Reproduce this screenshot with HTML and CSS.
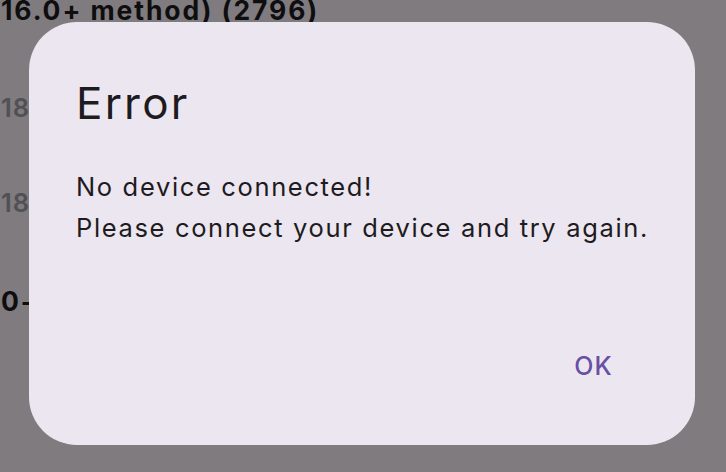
FILE: index.html
```html
<!DOCTYPE html>
<html lang="en">
<head>
<meta charset="utf-8">
<title>Error</title>
<link rel="stylesheet" href="styles.css">
</head>
<body>
<main class="page">
  <div class="row row-title row-first">16.0+ method) (2796)</div>
  <div class="row row-sub row-sub-1">18</div>
  <div class="row row-sub row-sub-2">18</div>
  <div class="row row-title row-last">0-</div>
</main>
<div class="scrim">
  <section class="dialog" role="alertdialog" aria-labelledby="dlg-title">
    <h1 class="dialog-title" id="dlg-title">Error</h1>
    <p class="dialog-body">No device connected!<br>Please connect your device and try again.</p>
    <div class="dialog-actions">
      <button class="text-button" type="button">OK</button>
    </div>
  </section>
</div>
</body>
</html>
```
FILE: styles.css
```css
html, body {
  margin: 0;
  padding: 0;
}
body {
  width: 726px;
  height: 472px;
  overflow: hidden;
  background: #fef7ff;
  font-family: Inter, "Noto Sans", sans-serif;
  color: #1d1b20;
}
.page {
  display: flex;
  flex-direction: column;
  padding-left: 1px;
}
.row {
  line-height: 32px;
  white-space: nowrap;
}
.row-title {
  font-size: 26.5px;
  font-weight: 700;
  letter-spacing: 1.9px;
  color: #1d1b20;
}
.row-sub {
  font-size: 25.5px;
  font-weight: 600;
  letter-spacing: 1px;
  color: #a3a0a7;
}
.row-first { margin-top: -6px; }
.row-sub-1 { margin-top: 66px; }
.row-sub-2 { margin-top: 63px; }
.row-last { margin-top: 66px; }

.scrim {
  position: fixed;
  inset: 0;
  background: rgba(0, 0, 0, 0.5);
  display: flex;
  align-items: flex-start;
  justify-content: flex-start;
  padding: 22px 0 0 29px;
}
.dialog {
  box-sizing: border-box;
  width: 666px;
  height: 423px;
  border-radius: 48px;
  background: #ece6f0;
  padding: 55px 30px 54px 47px;
  display: flex;
  flex-direction: column;
}
.dialog-title {
  margin: 0;
  font-size: 44px;
  font-weight: 400;
  line-height: 52px;
  letter-spacing: 2.2px;
  color: #1d1b20;
}
.dialog-body {
  margin: 37px 0 0;
  font-size: 25.5px;
  line-height: 41px;
  letter-spacing: 1.65px;
  color: #1d1b20;
  white-space: nowrap;
}
.dialog-actions {
  margin-top: auto;
  display: flex;
  justify-content: flex-end;
  padding-right: 30px;
}
.text-button {
  font-family: inherit;
  font-size: 25px;
  font-weight: 500;
  line-height: 30px;
  padding: 10px 22px;
  border: 0;
  background: transparent;
  color: #6750a4;
  border-radius: 25px;
  letter-spacing: 1.2px;
}
```
